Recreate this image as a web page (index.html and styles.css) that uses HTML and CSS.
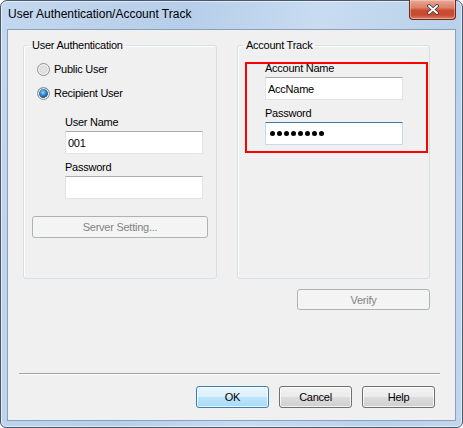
FILE: index.html
```html
<!DOCTYPE html>
<html lang="en">
<head>
    <meta charset="UTF-8">
    <title>User Authentication/Account Track</title>
    <link rel="stylesheet" href="styles.css">
</head>
<body>
    <div class="window">
        <div class="titlebar">
            <span class="title">User Authentication/Account Track</span>
            <div class="close">
                <svg width="14" height="11" viewBox="0 0 14 11">
                    <path d="M3 2 L11 9 M11 2 L3 9" stroke="#3b3b3b" stroke-width="3.6" stroke-linecap="round"/>
                    <path d="M3 2 L11 9 M11 2 L3 9" stroke="#ffffff" stroke-width="2" stroke-linecap="round"/>
                </svg>
            </div>
        </div>

        <div class="client">
            <div class="groups">
                <fieldset class="group">
                    <legend>User Authentication</legend>
                    <div class="radio-row">
                        <span class="radio"></span>
                        <span>Public User</span>
                    </div>
                    <div class="radio-row">
                        <span class="radio checked"></span>
                        <span>Recipient User</span>
                    </div>
                    <div class="fields">
                        <div class="field-label">User Name</div>
                        <div class="textbox">001</div>
                        <div class="field-label">Password</div>
                        <div class="textbox"></div>
                    </div>
                    <div class="btn disabled server-btn">Server Setting...</div>
                </fieldset>

                <fieldset class="group">
                    <legend>Account Track</legend>
                    <div class="account">
                        <div class="mark"></div>
                        <div class="field-label first">Account Name</div>
                        <div class="textbox">AccName</div>
                        <div class="field-label">Password</div>
                        <div class="textbox focused">
                            <span class="dot"></span><span class="dot"></span><span class="dot"></span><span class="dot"></span>
                            <span class="dot"></span><span class="dot"></span><span class="dot"></span><span class="dot"></span>
                        </div>
                    </div>
                </fieldset>
            </div>

            <div class="verify-row">
                <div class="btn disabled verify-btn">Verify</div>
            </div>

            <div class="separator"></div>

            <div class="actions">
                <div class="btn default">OK</div>
                <div class="btn">Cancel</div>
                <div class="btn">Help</div>
            </div>
        </div>
    </div>
</body>
</html>
```

FILE: styles.css
```css
body {
    margin: 0;
    padding: 0;
    background-color: #ffffff;
    font-family: "Liberation Sans", Arial, sans-serif;
}

.window {
    width: 463px;
    height: 428px;
    box-sizing: border-box;
    border: 1px solid #47586c;
    border-radius: 7px 7px 6px 6px;
    box-shadow: inset 0 0 0 1px rgba(255, 255, 255, 0.55);
    background: linear-gradient(100deg, #c3d8ef 0%, #b6cee9 35%, #c8dcf1 60%, #b9d1ea 85%, #c2d7ee 100%);
    padding: 0 6px 6px 6px;
    display: flex;
    flex-direction: column;
}

.titlebar {
    height: 28px;
    display: flex;
    align-items: flex-start;
}

.title {
    margin-top: 5px;
    margin-left: 1px;
    font-size: 12px;
    line-height: 16px;
    color: #000;
}

.close {
    margin-left: auto;
    margin-top: -1px;
    width: 47px;
    height: 20px;
    box-sizing: border-box;
    border: 1px solid #6b2a1d;
    border-top: none;
    border-radius: 0 0 4px 4px;
    background: linear-gradient(#eaaa9a 0%, #dc7f68 40%, #c94b31 55%, #c94d33 80%, #d98068 100%);
    box-shadow: inset 0 0 0 1px rgba(255, 220, 210, 0.45);
    display: flex;
    align-items: center;
    justify-content: center;
}

.client {
    flex: 1;
    border: 1px solid #8b9fb6;
    background-color: #f0f0f0;
    font-size: 11px;
    letter-spacing: -0.25px;
    color: #000;
}

.groups {
    display: flex;
    gap: 20px;
    margin-top: 7px;
    padding-left: 15px;
}

.group {
    margin: 0;
    padding: 0;
    box-sizing: border-box;
    height: 242px;
    border: 1px solid #d5dfe5;
    border-radius: 3px;
    box-shadow: inset 1px 1px 0 #ffffff;
    min-width: 0;
}

.group:first-child {
    width: 194px;
}

.group:last-child {
    width: 193px;
}

.group legend {
    margin-left: 5px;
    padding: 0 3px;
    line-height: 16px;
}

.radio-row {
    height: 24px;
    display: flex;
    align-items: center;
    gap: 4px;
    margin-left: 13px;
}

.radio-row:first-of-type {
    margin-top: 4px;
}

.radio {
    width: 13px;
    height: 13px;
    box-sizing: border-box;
    border-radius: 50%;
    border: 1px solid #8e8f8f;
    background: radial-gradient(circle at 50% 50%, #e6e6e6 0%, #dcdcdc 45%, #f4f4f4 100%);
    box-shadow: inset 0 0 0 1px #f4f4f4;
}

.radio.checked {
    background: radial-gradient(circle at 45% 40%, #9bd6f6 0%, #2e84c4 35%, #1b4f85 60%, #e4e4e4 64%, #f4f4f4 100%);
}

.fields {
    margin-left: 41px;
    margin-top: 9px;
}

.field-label {
    line-height: 16px;
    margin-top: 5px;
}

.fields .field-label:first-child {
    margin-top: 0;
}

.textbox {
    width: 138px;
    height: 23px;
    box-sizing: border-box;
    margin-top: 1px;
    border: 1px solid #e2e3ea;
    border-top-color: #abadb3;
    background-color: #ffffff;
    padding-left: 2px;
    display: flex;
    align-items: center;
}

.textbox.focused {
    border-color: #c5daed;
    border-top-color: #3d7bad;
    padding-left: 4px;
    gap: 2px;
}

.dot {
    width: 5px;
    height: 5px;
    border-radius: 50%;
    background-color: #000;
}

.account {
    position: relative;
    margin-left: 27px;
    padding-top: 7px;
}

.account .field-label.first {
    margin-top: 0;
}

.mark {
    position: absolute;
    left: -20px;
    top: 9px;
    width: 183px;
    height: 91px;
    box-sizing: border-box;
    border: 2px solid #ff0000;
}

.btn {
    height: 22px;
    width: 73px;
    box-sizing: border-box;
    border: 1px solid #707070;
    border-radius: 3px;
    background: linear-gradient(#f2f2f2 0%, #ebebeb 50%, #dddddd 51%, #cfcfcf 100%);
    box-shadow: inset 0 0 0 1px rgba(255, 255, 255, 0.75);
    display: flex;
    align-items: center;
    justify-content: center;
}

.btn.default {
    border-color: #3c7fb1;
    background: linear-gradient(#eaf6fd 0%, #d9f0fc 50%, #bee6fd 51%, #a7d9f5 100%);
}

.btn.disabled {
    border-color: #adb2b5;
    background: #f4f4f4;
    color: #838383;
    box-shadow: none;
}

.server-btn {
    width: 176px;
    margin-left: 8px;
    margin-top: 17px;
}

.verify-row {
    display: flex;
    justify-content: flex-end;
    width: 422px;
    margin-top: 10px;
}

.verify-btn {
    width: 133px;
    height: 21px;
}

.separator {
    margin-top: 63px;
    margin-left: 11px;
    width: 421px;
    border-top: 1px solid #a0a0a0;
    border-bottom: 1px solid #ffffff;
}

.actions {
    display: flex;
    justify-content: flex-end;
    gap: 10px;
    margin-top: 11px;
    padding-right: 20px;
}
```
